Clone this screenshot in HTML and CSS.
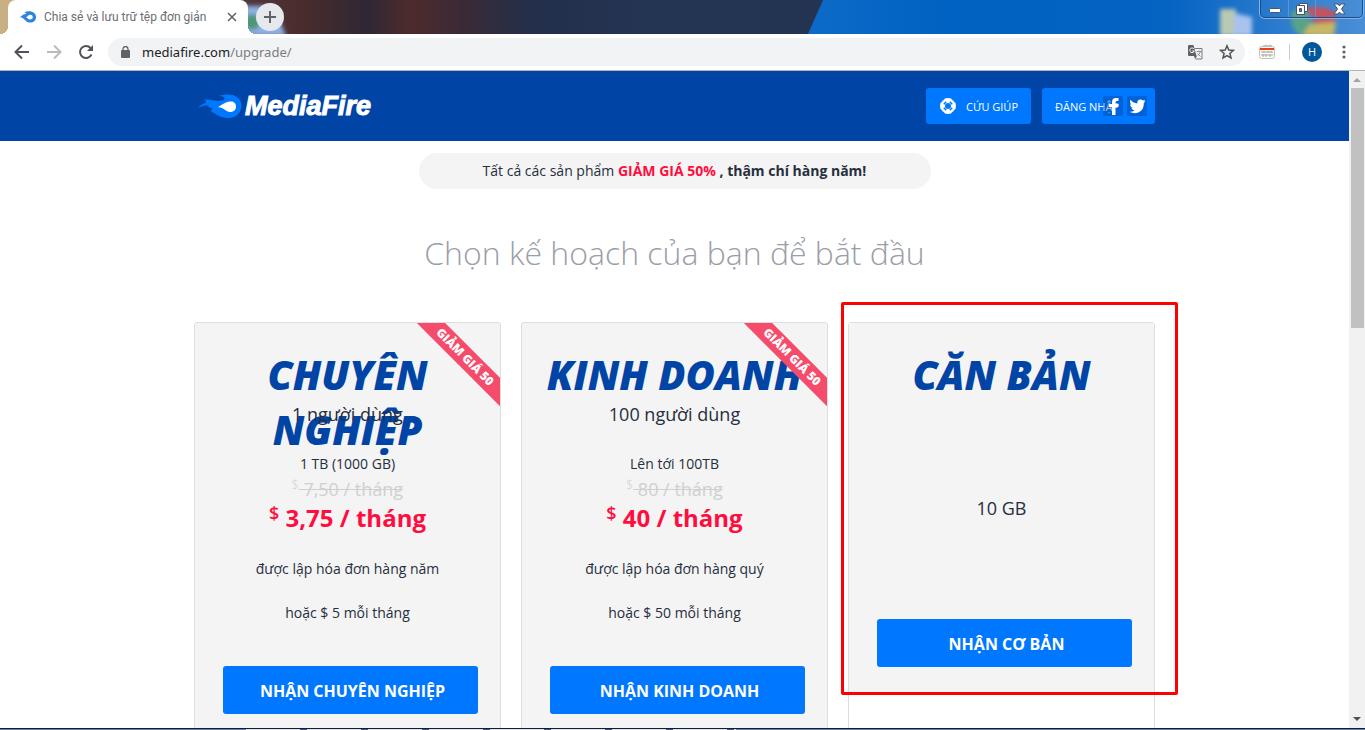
FILE: index.html
```html
<!DOCTYPE html>
<html lang="vi">
<head>
<meta charset="utf-8">
<title>Chia sẻ và lưu trữ tệp đơn giản</title>
<link rel="stylesheet" href="styles.css">
</head>
<body>
<div class="tabstrip">
  <svg class="wallpaper" viewBox="0 0 1365 34" preserveAspectRatio="none" aria-hidden="true">
    <defs>
      <linearGradient id="wall" x1="0" x2="1">
        <stop offset="0" stop-color="#c9b184"/>
        <stop offset=".1" stop-color="#b79b7c"/>
        <stop offset=".18" stop-color="#51363a"/>
        <stop offset=".22" stop-color="#4a2c2c"/>
        <stop offset=".27" stop-color="#2f2735"/>
        <stop offset=".3" stop-color="#4d2b2c"/>
        <stop offset=".34" stop-color="#3a2a36"/>
        <stop offset=".39" stop-color="#232f4b"/>
        <stop offset=".47" stop-color="#243453"/>
        <stop offset="1" stop-color="#22314f"/>
      </linearGradient>
      <linearGradient id="sky" x1="0" x2="1">
        <stop offset="0" stop-color="#0d6ac8"/>
        <stop offset=".25" stop-color="#0062c2"/>
        <stop offset=".65" stop-color="#0563c2"/>
        <stop offset="1" stop-color="#4a8fd6"/>
      </linearGradient>
      <filter id="soft" x="-30%" y="-30%" width="160%" height="160%"><feGaussianBlur stdDeviation="2"/></filter>
    </defs>
    <rect width="1365" height="34" fill="url(#wall)"/>
    <path d="M823 0H1365V34H808Z" fill="url(#sky)"/>
    <g filter="url(#soft)">
      <path d="M244 6h30l12 30h-42z" fill="#8fb1e6"/>
      <circle cx="252" cy="22" r="8" fill="#4d9678"/>
      <path d="M1220 9h16v27h-16z" fill="#b9c9b4"/>
      <path d="M1234 13l18 4v19h-18z" fill="#a9c3ee"/>
      <path d="M1292 12l12-6 12 26-16 4q-12-10-8-24z" fill="#59a388"/>
      <path d="M1306 8q20-4 30 6l-2 12-14 4z" fill="#c4525f"/>
      <path d="M1310 24l26-2-2 14h-32z" fill="#c5b766"/>
    </g>
  </svg>
  <div class="tab">
    <svg class="favicon" viewBox="0 0 44 32" aria-hidden="true"><path fill="#2b83dc" fill-rule="evenodd" d="M0 17C5 11 7 12 10 9Q15 9 18 6C16 4 14 4 12 3C31-4 44 5 44 16S36 32 26 31Q17 30 12 23C8 19 5 17 0 17ZM17 17C21 15 22 10 28 10S35 13 35 17S32 23 27 23S21 19 17 17Z"/></svg>
    <span class="tab-title">Chia sẻ và lưu trữ tệp đơn giản</span>
    <button class="tab-close" aria-label="Đóng"><svg viewBox="0 0 10 10"><path d="M1 1l8 8M9 1L1 9" stroke="#5f6368" stroke-width="1.500"/></svg></button>
  </div>
  <button class="new-tab" aria-label="Thẻ mới"><svg viewBox="0 0 12 12"><path d="M6 0v12M0 6h12" stroke="#5f6368" stroke-width="2"/></svg></button>
  <div class="window-controls">
    <button aria-label="Thu nhỏ"><svg width="12" height="10" viewBox="0 0 12 10"><rect x=".5" y="4.500" width="11" height="4" rx="1" fill="#fff" stroke="#4b5468"/></svg></button>
    <button aria-label="Khôi phục"><svg width="12" height="12" viewBox="0 0 12 12"><path d="M3.500.5h8v8h-8z" fill="#fff" stroke="#4b5468"/><path d="M.5 2.500h8v9h-8z" fill="#fff" stroke="#4b5468"/><path d="M3.500 5.500h2v3h-2z" fill="#4b7ec0" stroke="#4b5468"/></svg></button>
    <button aria-label="Đóng cửa sổ"><svg width="13" height="12" viewBox="0 0 13 12"><path d="M1 1h4l1.500 2L8 1h4L8.500 6l3.500 5H8L6.500 9 5 11H1l3.500-5z" fill="#fff" stroke="#4b5468"/></svg></button>
  </div>
</div>

<div class="toolbar">
  <div class="nav">
    <button aria-label="Quay lại"><svg viewBox="0 0 16 16"><path d="M15 8H2M8 1.500L1.500 8 8 14.500" fill="none" stroke="#50545a" stroke-width="2"/></svg></button>
    <button aria-label="Tiến"><svg viewBox="0 0 16 16"><path d="M1 8h13M8 1.500L14.500 8 8 14.500" fill="none" stroke="#b9bbbd" stroke-width="2"/></svg></button>
    <button aria-label="Tải lại"><svg viewBox="0 0 16 16"><path d="M13.500 10.500A6 6 0 1 1 12.500 4" fill="none" stroke="#50545a" stroke-width="2"/><path d="M15 1v6H9z" fill="#50545a"/></svg></button>
  </div>
  <div class="omnibox">
    <svg class="lock" viewBox="0 0 10 13" aria-hidden="true"><rect y="4" width="9" height="8" rx="1" fill="#5f6368"/><path d="M2 5V3a2.500 2.500 0 0 1 5 0v2" fill="none" stroke="#5f6368" stroke-width="1.300"/></svg>
    <span class="url">mediafire.com<span class="path">/upgrade/</span></span>
    <button aria-label="Dịch"><svg width="15" height="15" viewBox="0 0 15 15"><path d="M6.500 3.500h7.500v10.500H7.500" fill="#f1f3f4" stroke="#777b80"/><path d="M0 1q0-1 1-1h4.500l3 11H1q-1 0-1-1z" fill="#5f6368"/><path d="M6 4A2.300 2.300 0 1 0 6.300 6H4.300" fill="none" stroke="#fff"/><path d="M8.500 6.500h5M11 5.500v1M12.500 6.500q-1 3-3 4M9.500 8.500l3 3" fill="none" stroke="#777b80" stroke-width=".8"/><path d="M6 11h3l-2 3z" fill="#5f6368"/></svg></button>
    <button aria-label="Đánh dấu"><svg width="16" height="16" viewBox="0 0 16 16"><path d="M8 1.800l1.800 4.200 4.600.4-3.500 3 1.100 4.500L8 11.500l-4 2.400 1.100-4.500-3.500-3L6.200 6z" fill="none" stroke="#50545a" stroke-width="1.500"/></svg></button>
  </div>
  <button class="extension" aria-label="Tiện ích"><svg width="16" height="16" viewBox="0 0 16 16"><path d="M4 2l3-1 2 1 3-1 1 2" fill="none" stroke="#b8b8b0"/><rect x=".5" y="2.500" width="15" height="12" rx="2" fill="#fbfaf5" stroke="#c4c2b8"/><path d="M1 5h14" stroke="#e8401c" stroke-width="2"/><path d="M2 8h12M2 11h12M5 7v2M9 7v2M12 7v2M4 10v3M7 10v3M11 10v3" stroke="#a9a9a2"/></svg></button>
  <span class="divider"></span>
  <button class="avatar">H</button>
  <button class="menu" aria-label="Trình đơn"><svg width="4" height="14" viewBox="0 0 4 14" fill="#5f6368"><circle cx="2" cy="2" r="1.600"/><circle cx="2" cy="7" r="1.600"/><circle cx="2" cy="12" r="1.600"/></svg></button>
</div>

<div class="viewport">
  <div class="page">
    <header class="site-header">
      <div class="container header-row">
        <a class="logo" href="#">
          <svg viewBox="0 0 44 25" aria-hidden="true"><path fill="#0077ff" d="M0 14C4 9 7 10 8 8C8 6 6 6 5 6C12 4 19 9 26 6C28 4 25 2 21 2C30-1 43 0 43.500 12C43 21 35 24.500 30 24C22 24 18 20 14 18C12 16 14 15 15 15C12 13 8 14 11 12C7 11 4 12 0 14Z"/><path fill="#fff" d="M20 13C25 10 28 7.500 33 7.500C36 7.500 38 9.500 38 12.500S36 18 32 18C28 18 27 14 20 13Z"/></svg>
          <span>MediaFire</span>
        </a>
        <nav class="header-actions">
          <a class="action help" href="#"><svg width="16" height="16" viewBox="0 0 16 16" aria-hidden="true"><circle cx="8" cy="8" r="5.500" fill="none" stroke="#fff" stroke-width="5"/><path d="M3.800 6.200L6.200 3.800M9.800 3.800L12.200 6.200M12.200 9.800L9.800 12.200M6.200 12.200L3.800 9.800" stroke="#0077ff" stroke-width="1.500"/><path d="M1 4.500Q2 2 4.500 1M11.500 1Q14 2 15 4.500M15 11.500Q14 14 11.500 15M4.500 15Q2 14 1 11.500" fill="none" stroke="#0077ff" stroke-width="1"/></svg>CỨU GIÚP</a>
          <div class="action login"><a href="#">ĐĂNG NHẬP</a>
            <div class="social">
              <a href="#" aria-label="Facebook"><svg viewBox="0 0 20 20"><path fill="#fff" d="M9 19v-8H6V8h3V6q0-4 4-4h2.500v3H14q-1.500 0-1.500 1.500V8h3l-.5 3h-2.500v8z"/></svg></a>
              <a href="#" aria-label="Twitter"><svg viewBox="0 0 20 20"><path fill="#fff" d="M2.500 15.800Q5.500 16 7.500 14.400Q5 14 4.300 12h1.500Q3.200 11 3 8.300l1.500.4Q2 6.500 3.500 3.800Q6.300 7.300 10.300 7.400Q10 3.600 13.500 3.500q1.500 0 2.600 1l2-.8q-.3 1.200-1.400 2l1.800-.5q-.6 1-1.700 1.800Q17 12 13.800 15Q8.500 19 2.500 15.800Z"/></svg></a>
            </div>
          </div>
        </nav>
      </div>
    </header>

    <main class="container">
      <p class="promo">Tất cả các sản phẩm <strong class="sale">GIẢM GIÁ 50%</strong> <strong>, thậm chí hàng năm!</strong></p>
      <h1>Chọn kế hoạch của bạn để bắt đầu</h1>
      <div class="plans">
        <section class="plan">
          <div class="plan-main">
            <h2>CHUYÊN NGHIỆP</h2>
            <p class="users">1 người dùng</p>
            <p class="storage">1 TB (1000 GB)</p>
            <p class="old"><sup>$</sup><s> 7,50 / tháng</s></p>
            <p class="price"><sup>$</sup> 3,75 / tháng</p>
            <p class="billing">được lập hóa đơn hàng năm</p>
            <p class="billing">hoặc $ 5 mỗi tháng</p>
            <button class="buy">NHẬN CHUYÊN NGHIỆP</button>
            <div class="ribbon"><span>GIẢM GIÁ 50</span></div>
          </div>
        </section>
        <section class="plan">
          <div class="plan-main">
            <h2>KINH DOANH</h2>
            <p class="users">100 người dùng</p>
            <p class="storage">Lên tới 100TB</p>
            <p class="old"><sup>$</sup><s> 80 / tháng</s></p>
            <p class="price"><sup>$</sup> 40 / tháng</p>
            <p class="billing">được lập hóa đơn hàng quý</p>
            <p class="billing">hoặc $ 50 mỗi tháng</p>
            <button class="buy">NHẬN KINH DOANH</button>
            <div class="ribbon"><span>GIẢM GIÁ 50</span></div>
          </div>
        </section>
        <section class="plan basic">
          <div class="plan-main">
            <h2>CĂN BẢN</h2>
            <p class="capacity">10 GB</p>
            <button class="buy">NHẬN CƠ BẢN</button>
            <div class="highlight"></div>
          </div>
        </section>
      </div>
    </main>
  </div>
  <div class="scrollbar" aria-hidden="true">
    <svg width="16" height="17" viewBox="0 0 16 17"><path d="M4 11l4-4 4 4z" fill="#a3a3a3"/></svg>
    <div class="thumb"></div>
    <svg width="16" height="17" viewBox="0 0 16 17"><path d="M4 6l4 4 4-4z" fill="#505050"/></svg>
  </div>
</div>
<div class="taskbar"><div class="tasks"></div></div>
</body>
</html>
```

FILE: styles.css
```css
* { box-sizing: border-box; }
body {
  margin: 0;
  height: 100vh;
  display: flex;
  flex-direction: column;
  overflow: hidden;
  background: #fff;
  color: #272e3d;
  font-family: "Open Sans", "Noto Sans", sans-serif;
}
button { padding: 0; border: 0; background: none; font: inherit; }
a { color: inherit; text-decoration: none; }
svg { display: block; }
p, h1, h2 { margin: 0; }

.tabstrip { position: relative; display: flex; flex: none; height: 34px; padding-left: 8px; }
.wallpaper { position: absolute; inset: 0; width: 100%; height: 100%; }
.tab {
  position: relative;
  display: flex;
  align-items: center;
  gap: 8px;
  width: 240px;
  padding: 0 11px 0 12px;
  border-radius: 8px 8px 0 0;
  background: #fff;
}
.tab::before, .tab::after {
  content: "";
  position: absolute;
  bottom: 0;
  width: 8px;
  height: 8px;
}
.tab::before { right: 100%; background: radial-gradient(circle at 0 0, transparent 8px, #fff 8px); }
.tab::after { left: 100%; background: radial-gradient(circle at 100% 0, transparent 8px, #fff 8px); }
.favicon { width: 16px; height: 12px; }
.tab-title { flex: 1; font-family: Roboto, "Open Sans", sans-serif; font-size: 12px; color: #6a6e73; white-space: nowrap; }
.tab-close svg { width: 10px; height: 10px; }
.new-tab {
  position: relative;
  display: grid;
  place-items: center;
  width: 28px;
  height: 28px;
  margin: 3px 0 0 8px;
  border-radius: 50%;
  background: #e6e9ec;
}
.new-tab svg { width: 12px; height: 12px; }
.window-controls {
  position: relative;
  display: grid;
  grid-template-columns: 28px 27px 46px;
  height: 18px;
  margin: 0 2px 0 auto;
  border: 1px solid #1c4c8c;
  border-top: 0;
  border-radius: 0 0 5px 5px;
  box-shadow: 0 0 0 1px #83b3e4;
}
.window-controls button { display: grid; place-items: center; border-right: 1px solid #5c94d4; }
.window-controls button:last-child { border: 0; }

.toolbar {
  display: flex;
  flex: none;
  align-items: center;
  height: 37px;
  padding: 0 19px 0 14px;
  border-bottom: 1px solid #b3b3b8;
}
.nav { display: flex; gap: 16px; margin-right: 14px; }
.nav svg { width: 16px; height: 16px; }
.omnibox {
  display: flex;
  flex: 1;
  align-items: center;
  gap: 16px;
  height: 28px;
  padding: 0 10px 0 13px;
  border-radius: 14px;
  background: #f1f3f4;
}
.lock { width: 10px; height: 13px; }
.url { flex: 1; margin-left: -5px; font-size: 13px; font-family: "Noto Sans", sans-serif; color: #202124; }
.path { color: #7a7e83; }
.extension { margin-left: 14px; }
.divider { width: 1px; height: 16px; margin: 0 12px 0 14px; background: #c9cbce; }
.avatar { width: 20px; height: 20px; border-radius: 50%; background: #01579b; color: #fff; font-size: 11px; line-height: 20px; }
.menu { margin-left: 20px; }

.viewport { display: flex; flex: 1; min-height: 0; }
.page { flex: 1; overflow: hidden; }
.container { max-width: 961px; margin: 0 auto; }
.site-header { height: 70px; background: #0045a5; color: #fff; }
.header-row { display: flex; align-items: center; height: 100%; }
.logo { display: flex; align-items: center; gap: 3px; padding-left: 4px; }
.logo svg { width: 44px; height: 25px; }
.logo span {
  font: italic bold 27px/30px "Liberation Sans", Arial, sans-serif;
  -webkit-text-stroke: 1px #fff;
}
.header-actions { display: flex; gap: 11px; margin-left: auto; font-size: 11px; }
.action { display: flex; align-items: center; height: 36px; border-radius: 3px; background: #07f; }
.help { gap: 10px; width: 105px; padding-left: 14px; }
.login { position: relative; width: 113px; padding-left: 13px; }
.social { position: absolute; right: 8px; display: flex; gap: 4px; }
.social a { width: 20px; height: 20px; border-radius: 2px; background: rgba(0, 50, 130, .3); }

.promo {
  width: 512px;
  margin: 12px auto 0;
  border-radius: 18px;
  background: #f4f4f4;
  font-size: 14px;
  line-height: 36px;
  text-align: center;
}
.sale { color: #ff0d3e; }
h1 {
  margin-top: 40px;
  color: #9a9ea8;
  font-size: 32px;
  font-weight: 300;
  line-height: 48px;
  text-align: center;
}
.plans { display: grid; grid-template-columns: repeat(3, 1fr); gap: 20px; margin-top: 45px; text-align: center; }
.plan { height: 480px; border: 1px solid #dedede; border-radius: 3px; background: #f4f4f4; }
.plan-main { position: relative; padding-top: 24px; }
h2 {
  height: 55px;
  color: #0045a5;
  font-size: 40px;
  font-style: italic;
  font-weight: 800;
  line-height: 55px;
}
.users, .capacity { position: relative; font-size: 18px; line-height: 24px; }
.storage { margin-top: 28px; font-size: 14px; line-height: 20px; }
.old { margin-top: 3px; color: #d0d0d0; font-size: 18px; line-height: 24px; }
.price { margin-top: 1px; color: #ff0d3e; font-size: 24px; font-weight: 700; line-height: 32px; }
sup { font-size: 18px; font-weight: 600; line-height: 0; vertical-align: 7px; }
.old sup { font-size: 12px; font-weight: 300; }
.price + .billing { margin-top: 25px; }
.billing { margin-top: 24px; font-size: 14px; line-height: 20px; }
.buy {
  display: block;
  width: 255px;
  height: 48px;
  margin: 43px 0 0 28px;
  padding: 2px 0 0 4px;
  border-radius: 3px;
  background: #07f;
  color: #fff;
  font-size: 16px;
  font-weight: 700;
}
.ribbon { position: absolute; top: 0; right: 0; width: 84px; height: 84px; overflow: hidden; }
.ribbon span {
  position: absolute;
  top: 24px;
  left: -21px;
  width: 140px;
  background: #f54c6c;
  color: #fff;
  font-size: 12px;
  font-weight: 800;
  line-height: 20px;
  transform: rotate(45deg);
}
.basic { background: #fff; }
.basic .plan-main { padding-bottom: 26px; background: #f4f4f4; }
.capacity { margin-top: 94px; }
.basic .buy { margin-top: 99px; }
.highlight { position: absolute; inset: -21px -24px -2px -8px; border: 3px solid #f00; border-radius: 2px; }

.scrollbar { display: flex; flex-direction: column; width: 16px; background: #f1f1f1; }
.thumb { height: 240px; margin: 0 1px 0 2px; background: #c1c1c1; }
.scrollbar svg:last-child { margin-top: auto; }
.taskbar { flex: none; height: 2px; padding-left: 246px; border-top: 1px solid #101c38; background: #6480b0; }
.tasks { width: 490px; height: 1px; background: repeating-linear-gradient(90deg, #dfe4e4 0 54px, #40557a 54px 61px); }
```
